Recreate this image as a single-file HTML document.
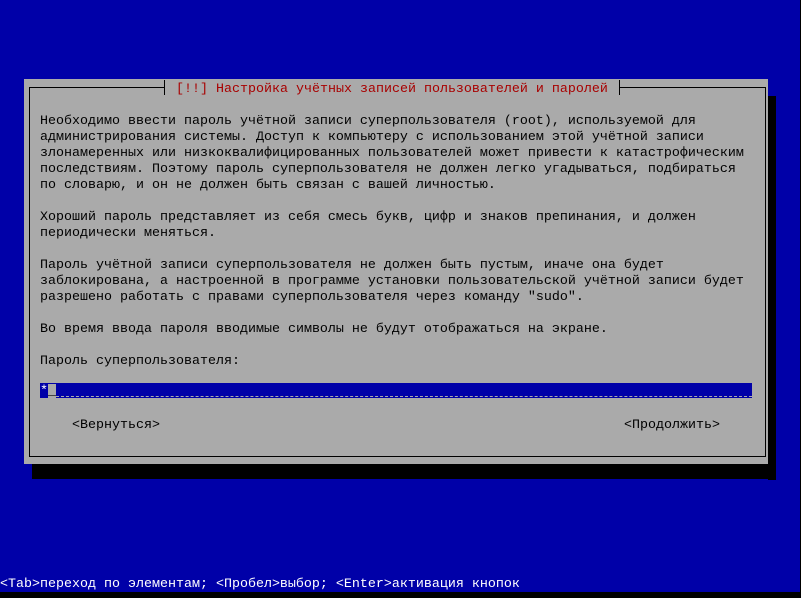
<!DOCTYPE html>
<html><head><meta charset="utf-8"><style>
html,body{margin:0;padding:0}
body{width:801px;height:598px;background:#000;position:relative;overflow:hidden;font-family:"Liberation Mono","DejaVu Sans Mono",monospace;font-size:13.33px;}
.blue{position:absolute;left:0;top:0;width:800px;height:592px;background:#0000a8}
.t{position:absolute;white-space:pre;line-height:16px;height:16px;color:#000;margin-top:2px}
.gray{position:absolute;left:24px;top:79px;width:744px;height:385px;background:#aaa}
.sh1{position:absolute;left:768px;top:96px;width:8px;height:384px;background:#000}
.sh2{position:absolute;left:32px;top:464px;width:744px;height:15px;background:#000}
.bx{position:absolute;left:29px;top:87px;width:735px;height:368px;border:1px solid #000}
.title{position:absolute;left:164px;top:80px;height:15px;width:454px;background:#aaa;border-left:1px solid #000;border-right:1px solid #000}
.in{position:absolute;left:40px;top:383px;width:712px;height:15px;background:#0000a8}
</style></head><body>
<div class="blue"></div>
<div class="gray"></div><div class="sh1"></div><div class="sh2"></div>
<div class="bx"></div>
<div class="title"></div>
<div class="t" style="left:176px;top:80px;color:#a80000">[!!] Настройка учётных записей пользователей и паролей</div>
<div class="t" style="left:40px;top:112px">Необходимо ввести пароль учётной записи суперпользователя (root), используемой для</div>
<div class="t" style="left:40px;top:128px">администрирования системы. Доступ к компьютеру с использованием этой учётной записи</div>
<div class="t" style="left:40px;top:144px">злонамеренных или низкоквалифицированных пользователей может привести к катастрофическим</div>
<div class="t" style="left:40px;top:160px">последствиям. Поэтому пароль суперпользователя не должен легко угадываться, подбираться</div>
<div class="t" style="left:40px;top:176px">по словарю, и он не должен быть связан с вашей личностью.</div>
<div class="t" style="left:40px;top:208px">Хороший пароль представляет из себя смесь букв, цифр и знаков препинания, и должен</div>
<div class="t" style="left:40px;top:224px">периодически меняться.</div>
<div class="t" style="left:40px;top:256px">Пароль учётной записи суперпользователя не должен быть пустым, иначе она будет</div>
<div class="t" style="left:40px;top:272px">заблокирована, а настроенной в программе установки пользовательской учётной записи будет</div>
<div class="t" style="left:40px;top:288px">разрешено работать с правами суперпользователя через команду "sudo".</div>
<div class="t" style="left:40px;top:320px">Во время ввода пароля вводимые символы не будут отображаться на экране.</div>
<div class="t" style="left:40px;top:352px">Пароль суперпользователя:</div>
<div class="in"></div>
<div class="t" style="left:40px;top:382px;color:#fff">*<span style="background:#aaa;color:#000">_</span></div>
<div style="position:absolute;left:56px;top:396px;width:696px;border-top:1px dashed #aaa"></div>
<div class="t" style="left:72px;top:416px">&lt;Вернуться&gt;</div>
<div class="t" style="left:624px;top:416px">&lt;Продолжить&gt;</div>
<div class="t" style="left:0;top:575px;color:#fff">&lt;Tab&gt;переход по элементам; &lt;Пробел&gt;выбор; &lt;Enter&gt;активация кнопок</div>
</body></html>
